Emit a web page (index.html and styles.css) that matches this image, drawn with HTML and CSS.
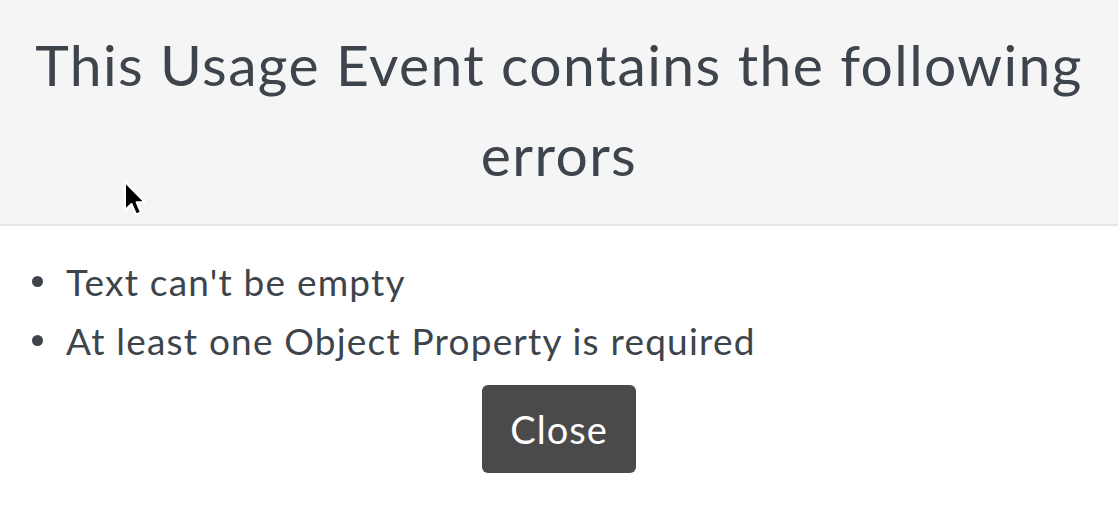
FILE: index.html
```html
<!DOCTYPE html>
<html>
<head>
<meta charset="utf-8">
<link rel="stylesheet" href="styles.css">
</head>
<body>
<div class="modal">
  <div class="modal-header">
    <h1 class="title">This Usage Event contains the following errors</h1>
  </div>
  <div class="modal-body">
    <ul class="errors">
      <li>Text can't be empty</li>
      <li>At least one Object Property is required</li>
    </ul>
    <div class="actions">
      <button class="btn-close">Close</button>
    </div>
  </div>
  <svg class="cursor" width="26" height="38" viewBox="0 0 26 38">
    <path d="M2 2 L2 30 L8.5 24 L13 34.5 L18 32.3 L13.6 22.3 L22 22.3 Z" fill="#000" stroke="#fff" stroke-width="2" stroke-linejoin="round"/>
  </svg>
</div>
</body>
</html>
```
FILE: styles.css
```css
html, body {
  margin: 0;
  padding: 0;
  background: #ffffff;
}
.modal {
  position: relative;
  width: 1118px;
  height: 508px;
  font-family: Lato, "Liberation Sans", sans-serif;
  color: #3e444b;
}
.modal-header {
  background: #f5f5f5;
  border-bottom: 2px solid #e4e4e4;
  height: 224px;
  box-sizing: content-box;
  padding: 0 20px;
}
.title {
  margin: 0;
  padding-top: 19px;
  font-size: 57px;
  font-weight: 400;
  letter-spacing: 1.4px;
  line-height: 90px;
  text-align: center;
}
.modal-body {
  padding: 26px 0 0 0;
}
.errors {
  margin: 0;
  padding-left: 32px;
  list-style: none;
  font-size: 37px;
  letter-spacing: 1.2px;
  line-height: 59px;
}
.errors li {
  display: flex;
  align-items: center;
}
.errors li::before {
  content: "";
  width: 11px;
  height: 11px;
  border-radius: 50%;
  background: #3e444b;
  margin-right: 23px;
  flex: none;
}
.actions {
  display: flex;
  justify-content: center;
  margin-top: 15px;
}
.btn-close {
  width: 154px;
  height: 88px;
  background: #4a4a4a;
  color: #ffffff;
  border: none;
  border-radius: 6px;
  font-family: Lato, "Liberation Sans", sans-serif;
  font-size: 38px;
  letter-spacing: 1px;
  padding: 0;
}
.cursor {
  position: absolute;
  left: 123px;
  top: 180px;
}
```
